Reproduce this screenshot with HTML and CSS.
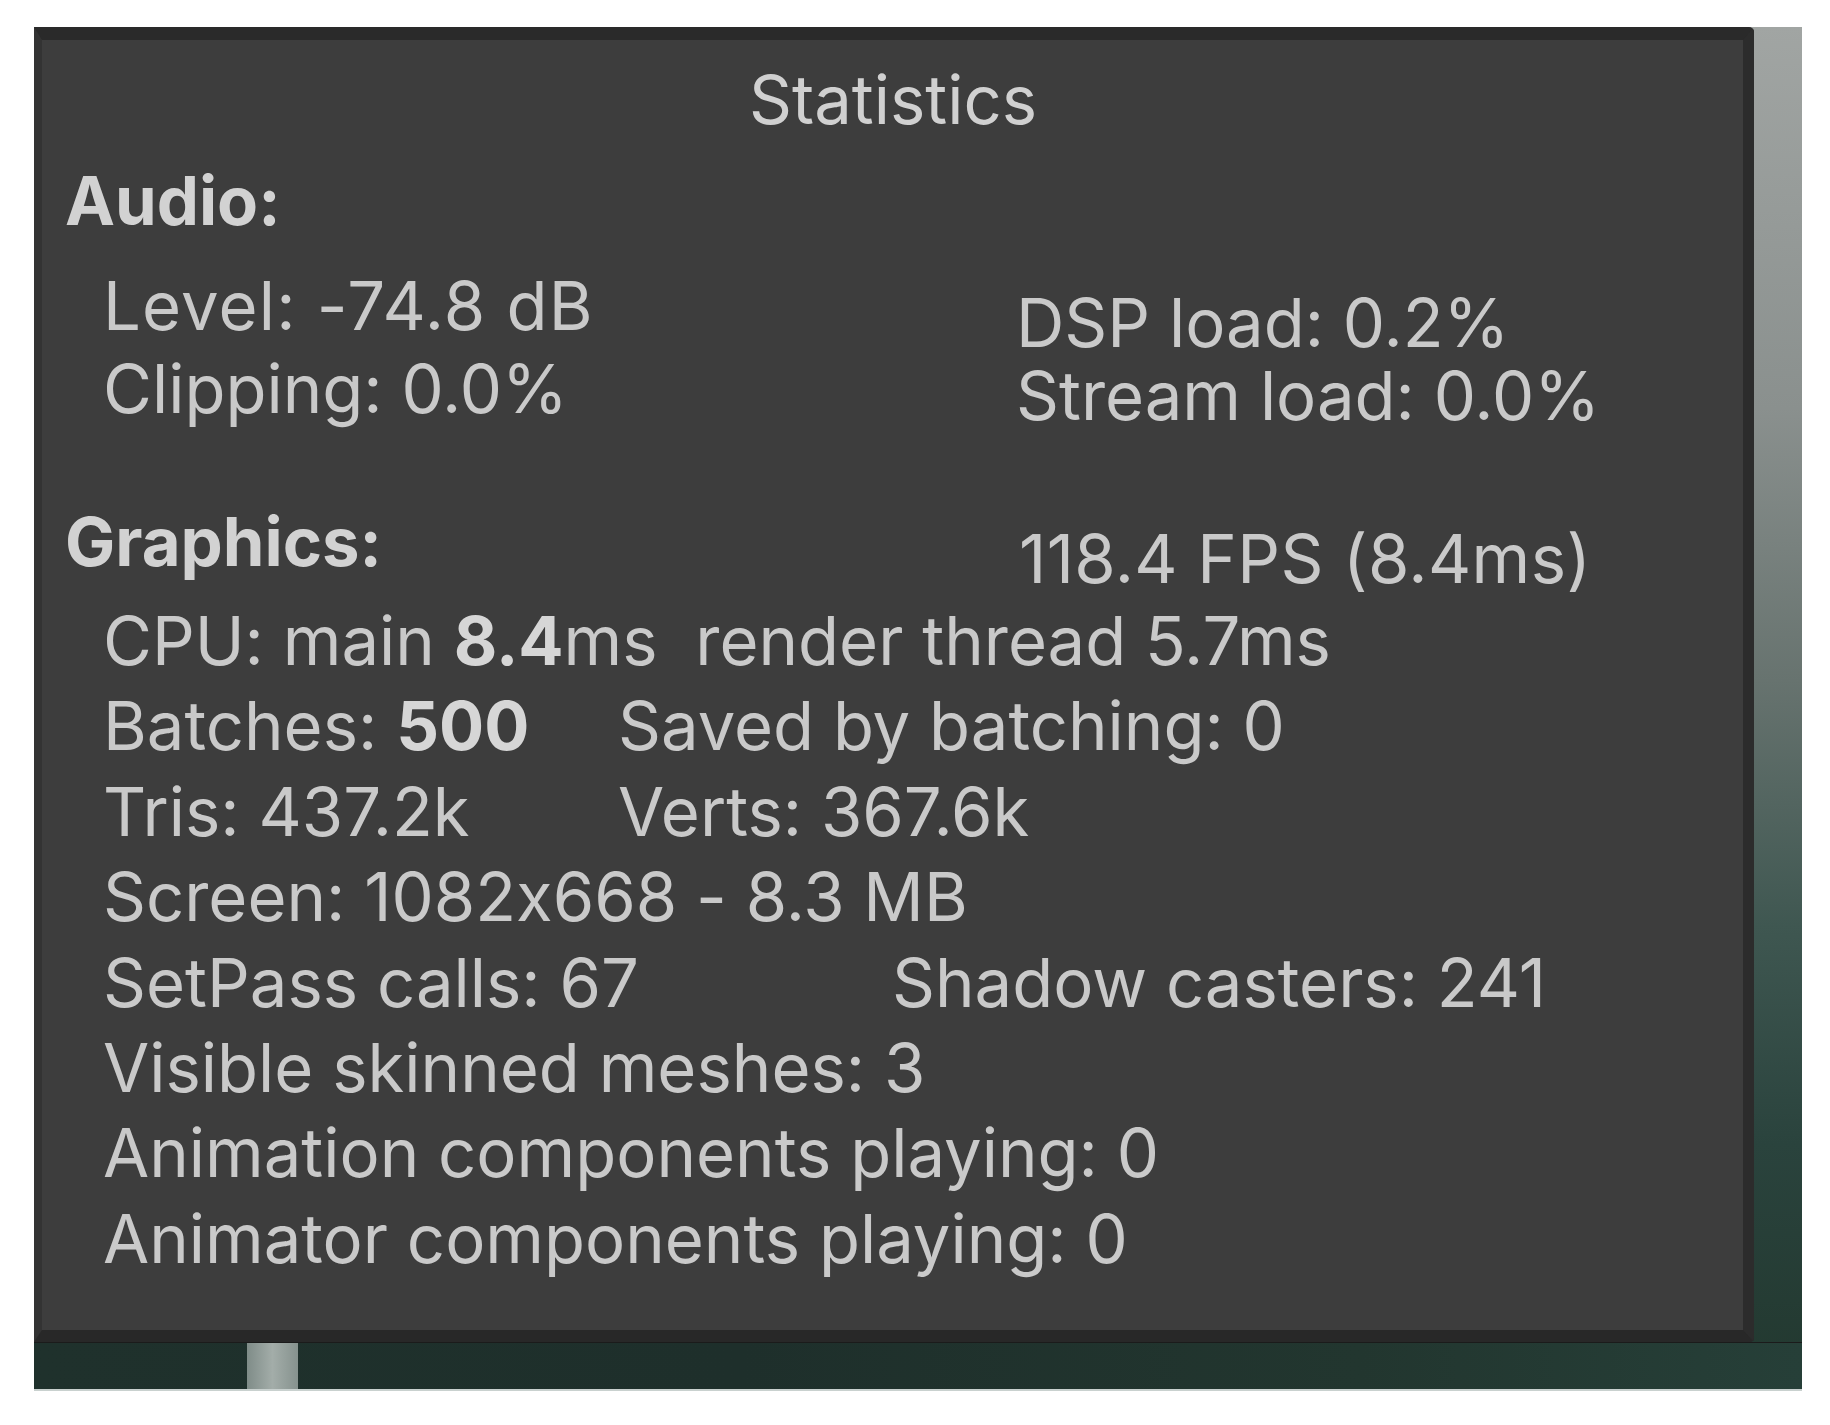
FILE: index.html
```
<!DOCTYPE html>
<html lang="en">
<head>
<meta charset="utf-8">
<title>Statistics</title>
<link rel="stylesheet" href="styles.css">
</head>
<body>
<div class="frame">
  <div class="panel">
    <div class="title">Statistics</div>
    <div class="section-head">Audio:</div>
    <div class="audio">
      <div class="audio-left">
        <div class="level">Level: -74.8 dB</div>
        <div>Clipping: 0.0%</div>
      </div>
      <div class="audio-right">
        <div>DSP load: 0.2%</div>
        <div>Stream load: 0.0%</div>
      </div>
    </div>
    <div class="gfx-head">
      <div class="gfx-label">Graphics:</div>
      <div class="fps">118.4 FPS (8.4ms)</div>
    </div>
    <div class="stats">
      <div class="row">CPU: main <b>8.4</b>ms&nbsp; render thread 5.7ms</div>
      <div class="row"><span class="cell c-batches">Batches: <b>500</b></span><span>Saved by batching: 0</span></div>
      <div class="row"><span class="cell c-tris">Tris: 437.2k</span><span>Verts: 367.6k</span></div>
      <div class="row">Screen: 1082x668 - 8.3 MB</div>
      <div class="row"><span class="cell c-setpass">SetPass calls: 67</span><span>Shadow casters: 241</span></div>
      <div class="row">Visible skinned meshes: 3</div>
      <div class="row">Animation components playing: 0</div>
      <div class="row">Animator components playing: 0</div>
    </div>
  </div>
  <div class="ground">
    <div class="post"></div>
  </div>
</div>
</body>
</html>
```

FILE: styles.css
```
html, body {
  margin: 0;
  padding: 0;
  background: #ffffff;
}

body {
  padding: 27px 0 0 34px;
}

.frame {
  width: 1768px;
  height: 1364px;
  box-sizing: border-box;
  display: flex;
  flex-direction: column;
  background: linear-gradient(180deg, #a1a5a3 0%, #8a908e 28%, #67736f 48%, #3f5751 66%, #2a433d 82%, #22382f 100%);
  border-bottom: 2px solid #c9d1cf;
}

.panel {
  width: 1720px;
  height: 1315px;
  flex: none;
  box-sizing: border-box;
  background: #3d3d3d;
  border-top: 13px solid #2a2a2a;
  border-bottom: 12px solid #282828;
  border-right: 11px solid #2c2c2c;
  border-left: 8px solid #333333;
  border-top-right-radius: 5px;
  border-bottom-right-radius: 4px;
  padding: 17px 0 0 23px;
  font-family: Inter, "Noto Sans", "Liberation Sans", sans-serif;
  font-feature-settings: "calt" 0;
  font-size: 67px;
  line-height: 85px;
  color: #c9c9c9;
}

.title {
  text-align: center;
  color: #d0d0d0;
  padding-right: 22px;
}

.section-head {
  margin-top: 16px;
  font-weight: 700;
  color: #d2d2d2;
}

.audio {
  display: flex;
  margin-top: 21px;
  padding-left: 38px;
}

.audio-left {
  width: 913px;
  line-height: 83px;
}

.level {
  letter-spacing: 1.2px;
}

.audio-right {
  padding-top: 22px;
  line-height: 73px;
}

.gfx-head {
  display: flex;
  margin-top: 67px;
}

.gfx-label {
  width: 954px;
  font-weight: 700;
  color: #d2d2d2;
}

.fps {
  padding-top: 17px;
  letter-spacing: 0.4px;
}

.stats {
  margin-top: -3px;
  padding-left: 38px;
  line-height: 85.4px;
}

.row {
  display: flex;
  white-space: pre;
}

.row b {
  font-weight: 700;
  color: #d6d6d6;
}

.cell {
  flex: none;
}

.c-batches { width: 515px; }
.c-tris { width: 515px; }
.c-setpass { width: 789px; }

.ground {
  flex: 1;
  width: 1768px;
  background: linear-gradient(90deg, #1f312c 0%, #1e2f2b 40%, #22362f 75%, #263f38 100%);
  border-top: 1px solid #1b1b1b;
}

.post {
  width: 51px;
  height: 100%;
  margin-left: 213px;
  background: linear-gradient(90deg, #7f8c88 0%, #a3ada9 50%, #86928e 100%);
}
```
